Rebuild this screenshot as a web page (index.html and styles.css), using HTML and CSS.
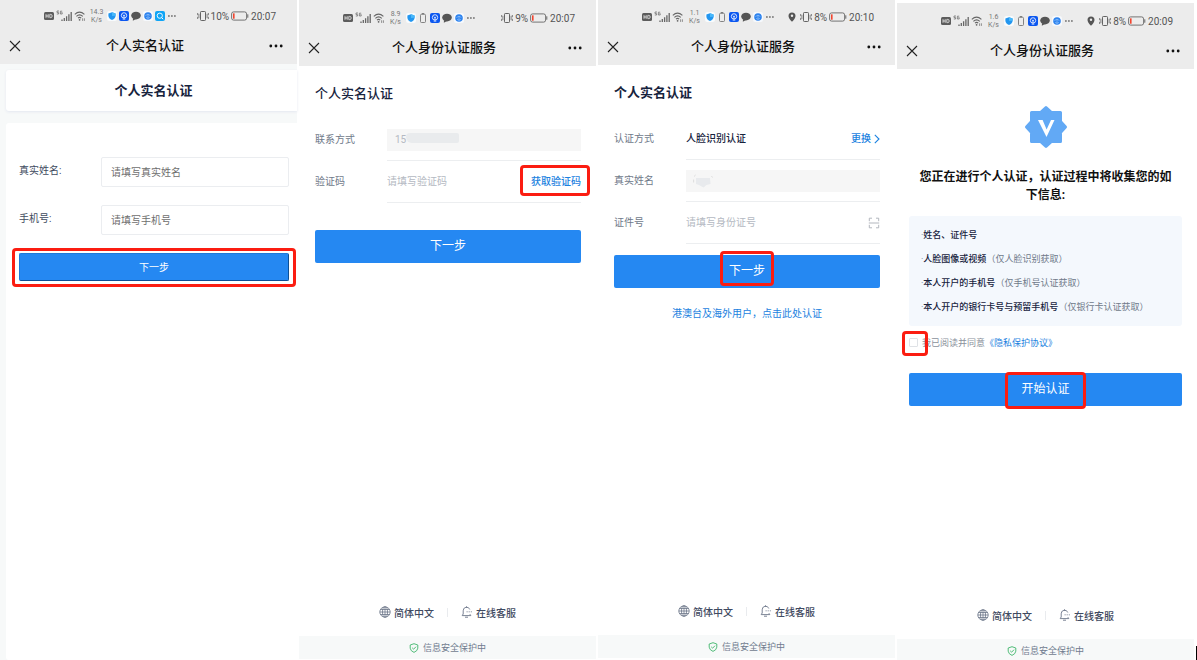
FILE: index.html
```html
<!DOCTYPE html>
<html lang="zh-CN">
<head>
    <meta charset="utf-8">
    <title>个人实名认证</title>
    <meta content="width=device-width,initial-scale=1" name="viewport">
    <link rel="stylesheet" href="styles.css">
</head>
<body>
    <!-- shared icons -->
    <svg class="sprite" aria-hidden="true">
        <symbol id="hd" viewBox="0 0 10 10">
            <rect x="0" y="1" width="10" height="8" rx="1.5" fill="#5c5c5c"/>
            <path d="M2 3.2v3.6M4.2 3.2v3.6M2 5h2.2M5.8 3.4h1a1.4 1.6 0 0 1 0 3.2h-1z" fill="none" stroke="#ececec" stroke-width=".8"/>
        </symbol>
        <symbol id="signal" viewBox="0 0 16 12">
            <path d="M3 1H1v1.6h1.6V4H.8M6.2 1.2H4.4V4h1.8V2.6h-.8" fill="none" stroke="#666" stroke-width=".7"/>
            <path d="M6 11V9.4M8.3 11V8M10.6 11V6.2M12.9 11V4.2M15.2 11V2" stroke="#666" stroke-width="1.3"/>
        </symbol>
        <symbol id="wifi" viewBox="0 0 12 12">
            <path d="M.8 4.4Q5.5 0 10.4 4.4M2.4 6.3q3.2-3 6.4 0M4 8.2q1.6-1.5 3.2 0" fill="none" stroke="#666" stroke-width="1.1"/>
            <circle cx="5.6" cy="9.8" r=".9" fill="#666"/>
            <path d="M8.6 8.3v2.6M10.4 8.3v2.6" stroke="#777" stroke-width=".8"/>
        </symbol>
        <symbol id="shield" viewBox="0 0 10 10">
            <rect width="10" height="10" rx="2.5" fill="#f8fbfd"/>
            <path d="M5 1.2 8.6 2.4v2.4Q8.4 7.6 5 9 1.6 7.6 1.4 4.8V2.4z" fill="#2296f0"/>
            <path d="M5 1.2 8.6 2.4v2.4L5 5z" fill="#48b8fa"/>
        </symbol>
        <symbol id="cell" viewBox="0 0 10 10">
            <rect x="2.5" y="1.3" width="5" height="8.2" rx="1" fill="none" stroke="#777" stroke-width=".9"/>
            <path d="M3.8.6h2.4" stroke="#777"/>
        </symbol>
        <symbol id="bulb" viewBox="0 0 10 10">
            <rect width="10" height="10" rx="2" fill="#0b57f0"/>
            <circle cx="5" cy="4.4" r="2.7" fill="none" stroke="#fff" stroke-width=".8"/>
            <path d="m3.8 3.8 1.2 1 1.2-1M5 4.8v2.6M3.7 8.1h2.6" fill="none" stroke="#fff" stroke-width=".8"/>
        </symbol>
        <symbol id="chat" viewBox="0 0 10 10">
            <ellipse cx="5" cy="4.6" rx="4.8" ry="3.9" fill="#555"/>
            <path d="M2 7 1.8 9.8 5 8z" fill="#555"/>
        </symbol>
        <symbol id="orb" viewBox="0 0 10 10">
            <rect width="10" height="10" rx="2.5" fill="#f6f9fd"/>
            <circle cx="5" cy="5" r="3.8" fill="#2c82ee"/>
            <path d="M2.4 4.5 5 3.2l2.4 1.3M5 3.2v4.2M3 6.4l2 1 2-1" fill="none" stroke="#b8dbff" stroke-width=".5"/>
        </symbol>
        <symbol id="search" viewBox="0 0 10 10">
            <rect width="10" height="10" rx="2" fill="#10a5f6"/>
            <circle cx="4.8" cy="4.7" r="2.6" fill="none" stroke="#fff" stroke-width=".9"/>
            <path d="m6.6 6.6 1.6 1.6" stroke="#fff" stroke-width="1"/>
        </symbol>
        <symbol id="more" viewBox="0 0 10 10">
            <path d="M1.2 5h1.4M4.2 5h1.4M7.2 5h1.4" stroke="#555" stroke-width="1.4"/>
        </symbol>
        <symbol id="pin" viewBox="0 0 8 10">
            <path d="M4 .4a3.5 3.5 0 0 1 3.5 3.5Q7.4 6.2 4 9.8.6 6.2.5 3.9A3.5 3.5 0 0 1 4 .4z" fill="#555"/>
            <circle cx="4" cy="3.8" r="1.2" fill="#ececec"/>
        </symbol>
        <symbol id="vibrate" viewBox="0 0 12 10">
            <rect x="3.5" y=".5" width="5" height="9" rx=".8" fill="none" stroke="#555" stroke-width=".9"/>
            <path d="M1.9 2.8v4.4M.6 2v2.2M.6 5.8V8M10.1 2.8v4.4M11.4 2v2.2M11.4 5.8V8" stroke="#666" stroke-width=".8"/>
        </symbol>
        <symbol id="battery" viewBox="0 0 18 10">
            <rect x=".6" y=".9" width="15" height="8.2" rx="2" fill="none" stroke="#666" stroke-width=".9"/>
            <path d="M16.8 3.3v3.4" stroke="#666" stroke-width="1"/>
            <rect x="2" y="2.3" width="1.6" height="5.4" rx=".5" fill="#f2452f"/>
        </symbol>
        <symbol id="close" viewBox="0 0 12 12">
            <path d="m1 1 10 10M11 1 1 11" stroke="#222" stroke-width="1.1"/>
        </symbol>
        <symbol id="dots" viewBox="0 0 14 4">
            <circle cx="1.8" cy="2" r="1.4" fill="#111"/>
            <circle cx="7" cy="2" r="1.4" fill="#111"/>
            <circle cx="12.2" cy="2" r="1.4" fill="#111"/>
        </symbol>
        <symbol id="globe" viewBox="0 0 12 12">
            <g fill="none" stroke="#6b7588" stroke-width=".8">
                <circle cx="6" cy="6" r="5.2"/>
                <ellipse cx="6" cy="6" rx="2.5" ry="5.2"/>
                <path d="M6 .8v10.4M.8 6h10.4M1.5 3.5h9M1.5 8.5h9"/>
            </g>
        </symbol>
        <symbol id="bell" viewBox="0 0 12 12">
            <g fill="none" stroke="#6b7588" stroke-width=".9">
                <path d="M8.8 3.5A3.4 3.4 0 0 0 2.2 4.8V8L1.2 9.6h8.6L8.9 8.2M5.5.3v1.3M4 11.2h3"/>
                <path d="M5.6 5.8h1M7.7 5.8h1M9.8 5.8h1"/>
            </g>
        </symbol>
        <symbol id="safe" viewBox="0 0 10 10">
            <path d="M5 .7 8.8 2v3.2Q8.5 8 5 9.4 1.5 8 1.2 5.2V2z" fill="none" stroke="#3db56a" stroke-width=".9"/>
            <path d="m3.2 4.8 1.4 1.4 2.4-2.5" fill="none" stroke="#3db56a" stroke-width=".9"/>
        </symbol>
    </svg>

    <main class="screens">
        <section class="screen screen-gray">
            <header class="topbar">
                <div class="status">
                    <svg class="i10"><use href="#hd"/></svg>
                    <svg class="i-signal"><use href="#signal"/></svg>
                    <svg class="i12"><use href="#wifi"/></svg>
                    <span class="speed">14.3<br>K/s</span>
                    <svg class="i10"><use href="#shield"/></svg>
                    <svg class="i10"><use href="#bulb"/></svg>
                    <svg class="i10"><use href="#chat"/></svg>
                    <svg class="i10"><use href="#orb"/></svg>
                    <svg class="i10"><use href="#search"/></svg>
                    <svg class="i10"><use href="#more"/></svg>
                    <div class="status-right">
                        <svg class="i-vibrate"><use href="#vibrate"/></svg>
                        <span>10%</span>
                        <svg class="i-battery"><use href="#battery"/></svg>
                        <time>20:07</time>
                    </div>
                </div>
                <nav class="navbar">
                    <button type="button" class="nav-button" aria-label="关闭"><svg class="i12"><use href="#close"/></svg></button>
                    <h1>个人实名认证</h1>
                    <button type="button" class="nav-button" aria-label="更多"><svg class="i-dots"><use href="#dots"/></svg></button>
                </nav>
            </header>
            <h2 class="card card-title">个人实名认证</h2>
            <form class="card card-form">
                <div class="field">
                    <label for="realName">真实姓名:</label>
                    <input id="realName" type="text" placeholder="请填写真实姓名">
                </div>
                <div class="field">
                    <label for="mobile">手机号:</label>
                    <input id="mobile" type="text" placeholder="请填写手机号">
                </div>
                <button type="button" class="submit-small mark mark-wide">下一步</button>
            </form>
        </section>

        <section class="screen screen-second">
            <header class="topbar topbar-tall">
                <div class="status">
                    <svg class="i10"><use href="#hd"/></svg>
                    <svg class="i-signal"><use href="#signal"/></svg>
                    <svg class="i12"><use href="#wifi"/></svg>
                    <span class="speed">8.9<br>K/s</span>
                    <svg class="i10"><use href="#shield"/></svg>
                    <svg class="i10"><use href="#cell"/></svg>
                    <svg class="i10"><use href="#bulb"/></svg>
                    <svg class="i10"><use href="#chat"/></svg>
                    <svg class="i10"><use href="#orb"/></svg>
                    <svg class="i10"><use href="#more"/></svg>
                    <div class="status-right">
                        <svg class="i-vibrate"><use href="#vibrate"/></svg>
                        <span>9%</span>
                        <svg class="i-battery"><use href="#battery"/></svg>
                        <time>20:07</time>
                    </div>
                </div>
                <nav class="navbar">
                    <button type="button" class="nav-button" aria-label="关闭"><svg class="i12"><use href="#close"/></svg></button>
                    <h1>个人身份认证服务</h1>
                    <button type="button" class="nav-button" aria-label="更多"><svg class="i-dots"><use href="#dots"/></svg></button>
                </nav>
            </header>
            <form class="content">
                <h2 class="heading">个人实名认证</h2>
                <div class="row">
                    <label for="contact">联系方式</label>
                    <div class="row-body">
                        <input id="contact" class="locked" type="text" value="15" disabled>
                        <span class="smudge smudge-phone"></span>
                    </div>
                </div>
                <div class="row">
                    <label for="code">验证码</label>
                    <div class="row-body">
                        <input id="code" type="text" placeholder="请填写验证码">
                        <button type="button" class="text-button mark mark-code">获取验证码</button>
                    </div>
                </div>
                <button type="button" class="submit submit-second">下一步</button>
            </form>
            <footer class="links">
                <a href="#"><svg class="i12"><use href="#globe"/></svg>简体中文</a>
                <span class="divider"></span>
                <a href="#"><svg class="i12"><use href="#bell"/></svg>在线客服</a>
            </footer>
            <div class="protect"><svg class="i10"><use href="#safe"/></svg>信息安全保护中</div>
        </section>

        <section class="screen screen-third">
            <header class="topbar topbar-mid">
                <div class="status">
                    <svg class="i10"><use href="#hd"/></svg>
                    <svg class="i-signal"><use href="#signal"/></svg>
                    <svg class="i12"><use href="#wifi"/></svg>
                    <span class="speed">1.1<br>K/s</span>
                    <svg class="i10"><use href="#shield"/></svg>
                    <svg class="i10"><use href="#cell"/></svg>
                    <svg class="i10"><use href="#bulb"/></svg>
                    <svg class="i10"><use href="#chat"/></svg>
                    <svg class="i10"><use href="#orb"/></svg>
                    <svg class="i10"><use href="#more"/></svg>
                    <div class="status-right">
                        <svg class="i-pin"><use href="#pin"/></svg>
                        <svg class="i-vibrate"><use href="#vibrate"/></svg>
                        <span>8%</span>
                        <svg class="i-battery"><use href="#battery"/></svg>
                        <time>20:10</time>
                    </div>
                </div>
                <nav class="navbar">
                    <button type="button" class="nav-button" aria-label="关闭"><svg class="i12"><use href="#close"/></svg></button>
                    <h1>个人身份认证服务</h1>
                    <button type="button" class="nav-button" aria-label="更多"><svg class="i-dots"><use href="#dots"/></svg></button>
                </nav>
            </header>
            <form class="content">
                <h2 class="heading heading-bold">个人实名认证</h2>
                <div class="row">
                    <span class="row-label">认证方式</span>
                    <div class="row-body">
                        <strong class="method">人脸识别认证</strong>
                        <button type="button" class="text-button">更换
                            <svg class="i-arrow" viewBox="0 0 6 10"><path d="m.8.8 4.2 4.2L.8 9.2" fill="none" stroke="#1c82e0" stroke-width="1.1"/></svg>
                        </button>
                    </div>
                </div>
                <div class="row">
                    <label for="person">真实姓名</label>
                    <div class="row-body">
                        <input id="person" class="locked" type="text" disabled>
                        <svg class="smudge smudge-name" viewBox="0 0 20 14"><path d="M3 4h14l.5 6-4 1-3 2.5L6 11l-3-1z" fill="#e8eaed"/><path d="M1 2.5 2.6 1M.6 5.5v3M18.5 2l1 1.5" stroke="#ddd"/></svg>
                    </div>
                </div>
                <div class="row">
                    <label for="idCard">证件号</label>
                    <div class="row-body">
                        <input id="idCard" type="text" placeholder="请填写身份证号">
                        <svg class="i12" viewBox="0 0 12 12"><path d="M4 1.2H1.3v3M8 1.2h2.7v3M4 10.8H1.3v-3M8 10.8h2.7v-3M.8 6h10.4" fill="none" stroke="#aaafb7" stroke-width=".9"/></svg>
                    </div>
                </div>
                <button type="button" class="submit submit-third"><span class="mark mark-next">下一步</span></button>
                <a class="overseas" href="#">港澳台及海外用户，点击此处认证</a>
            </form>
            <footer class="links">
                <a href="#"><svg class="i12"><use href="#globe"/></svg>简体中文</a>
                <span class="divider"></span>
                <a href="#"><svg class="i12"><use href="#bell"/></svg>在线客服</a>
            </footer>
            <div class="protect"><svg class="i10"><use href="#safe"/></svg>信息安全保护中</div>
        </section>

        <section class="screen screen-fourth">
            <header class="topbar topbar-tall">
                <div class="status">
                    <svg class="i10"><use href="#hd"/></svg>
                    <svg class="i-signal"><use href="#signal"/></svg>
                    <svg class="i12"><use href="#wifi"/></svg>
                    <span class="speed">1.6<br>K/s</span>
                    <svg class="i10"><use href="#shield"/></svg>
                    <svg class="i10"><use href="#cell"/></svg>
                    <svg class="i10"><use href="#bulb"/></svg>
                    <svg class="i10"><use href="#chat"/></svg>
                    <svg class="i10"><use href="#orb"/></svg>
                    <svg class="i10"><use href="#more"/></svg>
                    <div class="status-right">
                        <svg class="i-pin"><use href="#pin"/></svg>
                        <svg class="i-vibrate"><use href="#vibrate"/></svg>
                        <span>8%</span>
                        <svg class="i-battery"><use href="#battery"/></svg>
                        <time>20:09</time>
                    </div>
                </div>
                <nav class="navbar">
                    <button type="button" class="nav-button" aria-label="关闭"><svg class="i12"><use href="#close"/></svg></button>
                    <h1>个人身份认证服务</h1>
                    <button type="button" class="nav-button" aria-label="更多"><svg class="i-dots"><use href="#dots"/></svg></button>
                </nav>
            </header>
            <form class="content content-consent">
                <svg class="badge" viewBox="0 0 44 44">
                    <path d="M22 2.5 27.5 7.500H36.500V16.500L41.500 22 36.500 27.500V36.500H27.500L22 41.500 16.500 36.500H7.500V27.500L2.500 22 7.500 16.500V7.500H16.500z" fill="#62a9f5" stroke="#62a9f5" stroke-width="3" stroke-linejoin="round"/>
                    <path d="M14 15h4.600l4 9.600L27 15h3.500l-8 17z" fill="#fff"/>
                </svg>
                <h2 class="notice">您正在进行个人认证，认证过程中将收集您的如下信息:</h2>
                <ul class="info">
                    <li>·<b>姓名、证件号</b></li>
                    <li>·<b>人脸图像或视频</b>（仅人脸识别获取）</li>
                    <li>·<b>本人开户的手机号</b>（仅手机号认证获取）</li>
                    <li>·<b>本人开户的银行卡号与预留手机号</b>（仅银行卡认证获取）</li>
                </ul>
                <div class="agree">
                    <span class="mark mark-check"><input id="agree" type="checkbox"></span>
                    <label for="agree">我已阅读并同意</label><a href="#">《隐私保护协议》</a>
                </div>
                <button type="button" class="submit submit-fourth"><span class="mark mark-start">开始认证</span></button>
            </form>
            <footer class="links">
                <a href="#"><svg class="i12"><use href="#globe"/></svg>简体中文</a>
                <span class="divider"></span>
                <a href="#"><svg class="i12"><use href="#bell"/></svg>在线客服</a>
            </footer>
            <div class="protect"><svg class="i10"><use href="#safe"/></svg>信息安全保护中</div>
        </section>
    </main>
    <span class="caret"></span>
</body>
</html>
```

FILE: styles.css
```css
* {
    box-sizing: border-box;
}

body {
    margin: 0;
    background: #fff;
    color: #17233d;
    font-family: Roboto, "Noto Sans CJK SC", sans-serif;
    font-size: 10px;
}

h1, h2, ul {
    margin: 0;
    padding: 0;
}

button, input {
    font: inherit;
}

button {
    padding: 0;
    border: 0;
    background: none;
    cursor: pointer;
}

a {
    color: #1c82e0;
    text-decoration: none;
}

svg {
    flex: none;
    display: block;
}

.sprite {
    position: absolute;
    width: 0;
    height: 0;
}

/* icon sizes */
.i10 {
    width: 10px;
    height: 10px;
}

.i12 {
    width: 12px;
    height: 12px;
}

.i-signal {
    width: 16px;
    height: 12px;
}

.i-pin {
    width: 8px;
    height: 10px;
    margin-right: 2px;
}

.i-vibrate {
    width: 12px;
    height: 10px;
}

.i-battery {
    width: 18px;
    height: 10px;
}

.i-dots {
    width: 14px;
    height: 4px;
}

.i-arrow {
    width: 6px;
    height: 10px;
}

.screens {
    display: grid;
    grid-template-columns: repeat(4, 1fr);
    gap: 2px;
    min-height: 100vh;
    padding-right: 3px;
}

.screen {
    display: flex;
    flex-direction: column;
    min-width: 0;
}

.screen-gray {
    background: #f7f9f9;
}

.screen-second {
    padding-bottom: 1px;
}

.screen-third {
    padding-bottom: 2px;
}

.screen-fourth {
    padding-top: 3px;
}

/* phone status bar and title bar */
.topbar {
    padding-bottom: 4px;
    background: #ececec;
}

.topbar-mid {
    padding-top: 1px;
}

.topbar-tall {
    padding-top: 2px;
}

.status {
    display: flex;
    align-items: center;
    gap: 2px;
    height: 32px;
    padding: 0 21px 0 44px;
    color: #555;
}

.speed {
    width: 17px;
    color: #777;
    font-size: 7px;
    line-height: 8px;
    text-align: center;
}

.status-right {
    display: flex;
    align-items: center;
    gap: 2px;
    margin-left: auto;
}

.navbar {
    display: flex;
    align-items: center;
    justify-content: space-between;
    height: 28px;
    padding: 0 14px 0 9px;
}

.navbar h1 {
    color: #111;
    font-size: 13px;
    font-weight: 500;
    line-height: 20px;
}

.nav-button {
    display: flex;
}

/* first screen */
.card {
    margin-left: 6px;
    background: #fff;
    border-radius: 3px 0 0 3px;
}

.card-title {
    margin-top: 6px;
    padding: 10px 0;
    font-size: 13px;
    font-weight: 700;
    line-height: 21px;
    text-align: center;
    padding-left: 4px;
    box-shadow: 0 1px 3px #e4e7f0;
}

.card-form {
    display: flex;
    flex: 1;
    flex-direction: column;
    gap: 18px;
    margin-top: 12px;
    padding: 34px 8px 0 13px;
}

.field {
    display: flex;
}

.field label {
    width: 82px;
    color: #414b60;
    line-height: 28px;
}

.field input {
    flex: 1;
    min-width: 0;
    height: 30px;
    padding: 0 9px;
    border: 1px solid #ebedf0;
    border-radius: 2px;
    outline: 0;
}

.field input::placeholder {
    color: #6e6e6e;
}

.submit-small {
    height: 28px;
    padding-bottom: 2px;
    border: 1px solid #2079d8;
    border-right-color: #0d4f96;
    border-bottom-color: #0d4f96;
    border-radius: 2px;
    background: #2588f2;
    color: #fff;
}

/* forms of the service screens */
.content {
    display: flex;
    flex: 1;
    flex-direction: column;
    padding: 14px 15px 0 16px;
}

.heading {
    margin-bottom: 12px;
    font-size: 13px;
    font-weight: 500;
    line-height: 27px;
}

.heading-bold {
    font-weight: 700;
}

.row {
    display: flex;
    height: 42px;
    color: #707a8a;
    line-height: 41px;
}

.row label,
.row-label {
    width: 72px;
}

.row-body {
    position: relative;
    display: flex;
    flex: 1;
    align-items: center;
    min-width: 0;
    border-bottom: 1px solid #eceef0;
}

.row input {
    flex: 1;
    width: 0;
    height: 22px;
    padding: 0;
    border: 0;
    outline: 0;
    background: none;
}

.row input::placeholder {
    color: #b4b9c2;
}

.row .locked {
    padding: 0 8px;
    background: #f6f6f6;
    color: #b4b9c2;
}

.method {
    flex: 1;
    color: #17233d;
    font-weight: 500;
}

.text-button {
    display: flex;
    align-items: center;
    gap: 3px;
    height: 22px;
    color: #1c82e0;
    font-weight: 500;
}

/* hides private data */
.smudge {
    position: absolute;
}

.smudge-phone {
    top: 14px;
    left: 19px;
    width: 53px;
    height: 10px;
    border-radius: 4px 2px 2px 6px;
    background: #e9ebed;
}

.smudge-name {
    left: 7px;
    width: 20px;
    height: 14px;
}

.submit {
    height: 33px;
    border-radius: 2px;
    background: #2588f2;
    color: #fff;
    font-size: 12px;
    line-height: 33px;
}

.submit-second {
    margin-top: 27px;
}

.submit-third {
    margin-top: 11px;
}

.submit-fourth {
    margin-top: 15px;
}

.overseas {
    margin-top: 17px;
    line-height: 18px;
    text-align: center;
}

/* consent screen */
.content-consent {
    padding: 36px 12px 0;
}

.badge {
    align-self: center;
    width: 44px;
    height: 44px;
}

.notice {
    margin: 19px 8px 12px;
    color: #111;
    font-size: 12px;
    font-weight: 700;
    line-height: 18px;
    text-align: center;
}

.info {
    padding: 7px 12px;
    border-radius: 3px;
    background: #f4f8fd;
    color: #707a8a;
    font-size: 9px;
    line-height: 24px;
    list-style: none;
}

.info b {
    color: #17233d;
    font-weight: 500;
}

.agree {
    display: flex;
    align-items: center;
    height: 32px;
    color: #8a919c;
    font-size: 9px;
}

.agree input {
    display: block;
    width: 9px;
    height: 9px;
    margin: 0;
    border: 1px solid #dfe2e6;
    border-radius: 1px;
    appearance: none;
}

.agree label {
    margin-left: 4px;
}

/* red highlight frames */
.mark {
    position: relative;
}

.mark::after {
    position: absolute;
    border: 3px solid #fb1d11;
    border-radius: 4px;
    content: "";
    pointer-events: none;
}

.mark-next,
.mark-start {
    display: inline-block;
}

.mark-wide::after {
    inset: -6px -8px -7px;
}

.mark-code::after {
    inset: -6px -9px -3px -11px;
}

.mark-next::after {
    inset: -4px -9px 2px;
}

.mark-start::after {
    inset: -1px -16px -3px;
}

.mark-check::after {
    inset: -7px -10px -9px -7px;
}

/* bottom */
.links {
    display: flex;
    align-items: center;
    justify-content: center;
    height: 24px;
    margin-bottom: 12px;
}

.links a {
    display: flex;
    align-items: center;
    gap: 3px;
    color: #3f4a61;
    font-weight: 500;
}

.divider {
    width: 1px;
    height: 9px;
    margin: 0 13px;
    background: #e9ebee;
}

.protect {
    display: flex;
    align-items: center;
    justify-content: center;
    gap: 4px;
    height: 23px;
    background: #f7f9f9;
    color: #717c8f;
    font-size: 9px;
}

.screen-fourth .protect {
    height: 21px;
    padding-top: 2px;
}

.caret {
    position: fixed;
    right: 0;
    bottom: 0;
    width: 1px;
    height: 14px;
    background: #000;
}
```
